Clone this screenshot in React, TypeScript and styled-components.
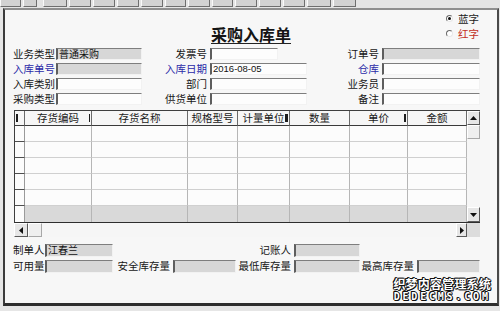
import React from 'react';
import styled, { createGlobalStyle } from 'styled-components';

const Global = createGlobalStyle`
  html, body { margin: 0; padding: 0; background: #e6e6e6; }
  body { font-family: "Noto Sans CJK SC", "Noto Sans", sans-serif; color: #111; }
  #root { width: 500px; height: 311px; overflow: hidden; }
`;

const Screen = styled.div`
  width: 500px;
  height: 311px;
  display: flex;
  flex-direction: column;
  background: #e6e6e6;
  overflow: hidden;
`;

const Toolbar = styled.div`
  height: 8px;
  flex-shrink: 0;
  display: flex;
  gap: 2px;
  align-items: flex-start;
  background: #e4e4e4;
`;

const ToolButton = styled.div<{ $w: number; $gap?: number }>`
  width: ${p => p.$w}px;
  margin-left: ${p => p.$gap ?? 0}px;
  height: 7px;
  box-sizing: border-box;
  background: #d2d2d2;
  border-left: 1px solid #fafafa;
  border-right: 1px solid #6e6e6e;
  border-bottom: 1px solid #6e6e6e;
`;

const Panel = styled.div`
  position: relative;
  margin-left: 3px;
  width: 496px;
  height: 298px;
  flex-shrink: 0;
  box-sizing: border-box;
  background: #f7f7f7;
  border-top: 2px solid #8e8e8e;
  border-left: 2px solid #3c3c3c;
  border-right: 2px solid #4a4a4a;
  border-bottom: 3px solid #2e2e2e;
  display: flex;
  flex-direction: column;
`;

const Head = styled.div`
  height: 36px;
  display: grid;
  grid-template-columns: 1fr auto 1fr;
`;

const Title = styled.h1`
  grid-column: 2;
  align-self: start;
  margin: 16px 0 0;
  height: 17px;
  font-size: 16px;
  line-height: 17px;
  font-weight: 700;
  color: #141414;
  border-bottom: 1px solid #222;
  white-space: nowrap;
`;

const RadioGroup = styled.div`
  grid-column: 3;
  justify-self: end;
  margin: 1px 18px 0 0;
  display: flex;
  flex-direction: column;
`;

const RadioItem = styled.label<{ $red?: boolean }>`
  display: flex;
  align-items: center;
  gap: 5px;
  height: 15px;
  font-size: 10.5px;
  line-height: 15px;
  color: ${p => (p.$red ? '#c2301e' : '#1a1a1a')};
`;

const RadioDot = styled.span<{ $on?: boolean }>`
  width: 7px;
  height: 7px;
  box-sizing: border-box;
  border-radius: 50%;
  border: 1px solid;
  border-color: #6a6a6a #e8e8e8 #e8e8e8 #6a6a6a;
  background: #fff;
  display: flex;
  align-items: center;
  justify-content: center;
  &::after {
    content: '';
    width: 3px;
    height: 3px;
    border-radius: 50%;
    background: ${p => (p.$on ? '#111' : 'transparent')};
  }
`;

const Form = styled.div`
  display: grid;
  grid-template-columns: 43px 86px 68px 97px 75px 98px;
  grid-auto-rows: 15px;
  align-items: center;
  padding-left: 8px;
`;

const Label = styled.span<{ $blue?: boolean; $right?: boolean; $col?: number }>`
  ${p => (p.$col ? `grid-column: ${p.$col};` : '')}
  font-size: 10.5px;
  line-height: 12px;
  white-space: nowrap;
  color: ${p => (p.$blue ? '#2a2aa8' : '#161616')};
  text-align: ${p => (p.$right ? 'right' : 'left')};
  padding-right: ${p => (p.$right ? 3 : 0)}px;
`;

const Field = styled.div<{ $gray?: boolean; $w?: number; $h?: number; $col?: number }>`
  box-sizing: border-box;
  height: ${p => p.$h ?? 12}px;
  width: ${p => (p.$w ? `${p.$w}px` : 'auto')};
  ${p => (p.$col ? `grid-column: ${p.$col};` : '')}
  background: ${p => (p.$gray ? '#d7d7d7' : '#fdfdfd')};
  border-top: 1px solid #7e7e7e;
  border-left: 2px solid #5e5e5e;
  border-right: 1px solid #f2f2f2;
  border-bottom: 1px solid #f2f2f2;
  display: flex;
  align-items: center;
  padding-left: 1px;
  white-space: nowrap;
`;

const FieldText = styled.span`
  font-size: 10px;
  line-height: 10px;
  color: #111;
`;

const DateText = styled.span`
  font-family: "Liberation Sans", Arial, sans-serif;
  font-size: 9.5px;
  line-height: 10px;
  color: #111;
`;

const GridWrap = styled.div`
  margin: 4px 0 0 9px;
  width: 466px;
  display: flex;
  flex-direction: column;
`;

const GridRow = styled.div`
  display: flex;
`;

const Table = styled.div`
  width: 453px;
  box-sizing: border-box;
  display: grid;
  grid-template-columns: 10px 67px 96px 50px 52px 60px 58px 59px;
  grid-template-rows: 15px repeat(6, 16px);
  border-top: 1px solid #3e3e3e;
  border-left: 1px solid #3e3e3e;
  border-bottom: 1px solid #2e2e2e;
  background: #fcfcfc;
`;

const HeadCell = styled.div`
  position: relative;
  box-sizing: border-box;
  background: #f6f6f6;
  border-right: 1px solid #6a6a6a;
  border-bottom: 1px solid #3a3a3a;
  font-size: 10.5px;
  line-height: 14px;
  text-align: center;
  white-space: nowrap;
  color: #1a1a1a;
`;

const Mark = styled.span<{ $side: 'left' | 'right'; $w: number }>`
  position: absolute;
  top: 3px;
  bottom: 3px;
  ${p => p.$side}: 1px;
  width: ${p => p.$w}px;
  background: #1e1e1e;
`;

const Cell = styled.div<{ $ind?: boolean; $total?: boolean }>`
  box-sizing: border-box;
  background: ${p => (p.$total && !p.$ind ? '#d9d9d9' : '#fcfcfc')};
  border-right: 1px solid ${p => (p.$ind ? '#9a9a9a' : '#b6b6b6')};
  border-bottom: ${p => (p.$total ? 'none' : `1px solid ${p.$ind ? '#4e4e4e' : '#d0d0d0'}`)};
`;

const VScroll = styled.div`
  width: 13px;
  box-sizing: border-box;
  display: flex;
  flex-direction: column;
  background: #f6f6f6;
  border-top: 1px solid #3e3e3e;
  border-bottom: 1px solid #2e2e2e;
`;

const ScrollBtn = styled.div<{ $w?: number; $h?: number }>`
  flex-shrink: 0;
  width: ${p => (p.$w ? `${p.$w}px` : 'auto')};
  height: ${p => (p.$h ? `${p.$h}px` : 'auto')};
  box-sizing: border-box;
  background: #e6e6e6;
  border: 1px solid;
  border-color: #ffffff #5a5a5a #5a5a5a #ffffff;
  display: flex;
  align-items: center;
  justify-content: center;
`;

const Thumb = styled.div<{ $w?: number; $h?: number }>`
  flex-shrink: 0;
  width: ${p => (p.$w ? `${p.$w}px` : 'auto')};
  height: ${p => (p.$h ? `${p.$h}px` : 'auto')};
  box-sizing: border-box;
  background: #efefef;
  border: 1px solid;
  border-color: #ffffff #a8a8a8 #a8a8a8 #ffffff;
`;

const Track = styled.div`
  flex: 1;
`;

const HScroll = styled.div`
  height: 14px;
  display: flex;
`;

const HBar = styled.div`
  width: 453px;
  display: flex;
  background: #f6f6f6;
`;

const Corner = styled.div`
  width: 13px;
  background: #dcdcdc;
`;

const Footer = styled.div`
  margin-top: 5px;
  padding-left: 8px;
  display: grid;
  grid-template-columns: 32px 68px 60px 63px 58px 66px 57px 63px;
  grid-auto-rows: 16px;
  align-items: center;
`;

const Watermark = styled.div`
  position: absolute;
  right: 6px;
  bottom: 1px;
  display: flex;
  flex-direction: column;
  align-items: center;
  color: #fff;
  text-shadow: 1px 0 0 #111, -1px 0 0 #111, 0 1px 0 #111, 0 -1px 0 #111, 1px 1px 0 #111, -1px -1px 0 #111;
  font-weight: 700;
`;

const WmLine = styled.span`
  font-size: 12px;
  line-height: 14px;
  letter-spacing: 0.2px;
`;

const WmSub = styled.span`
  font-family: "DejaVu Sans Mono", monospace;
  font-size: 10px;
  line-height: 11px;
  letter-spacing: 2.8px;
`;

const Tri = ({ dir }: { dir: 'up' | 'down' | 'left' | 'right' }) => {
  const pts = {
    up: '0,4 7,4 3.5,0',
    down: '0,0 7,0 3.5,4',
    left: '4,0 4,7 0,3.5',
    right: '0,0 0,7 4,3.5',
  }[dir];
  const vertical = dir === 'up' || dir === 'down';
  return (
    <svg width={vertical ? 7 : 4} height={vertical ? 4 : 7} viewBox={vertical ? '0 0 7 4' : '0 0 4 7'}>
      <polygon points={pts} fill="#111" />
    </svg>
  );
};

const toolWidths: Array<[number, number?]> = [
  [21], [14], [24, 4], [22], [22], [22], [22], [21], [22], [21], [22], [22], [22], [24], [23],
];

const headers: Array<{ t: string; mark?: { side: 'left' | 'right'; w: number } }> = [
  { t: '', mark: { side: 'left', w: 2 } },
  { t: '存货编码', mark: { side: 'right', w: 1 } },
  { t: '存货名称' },
  { t: '规格型号' },
  { t: '计量单位', mark: { side: 'right', w: 3 } },
  { t: '数量' },
  { t: '单价', mark: { side: 'right', w: 2 } },
  { t: '金额' },
];

export default function App() {
  const rows = [0, 1, 2, 3, 4, 5];
  return (
    <Screen>
      <Global />
      <Toolbar>
        {toolWidths.map(([w, g], i) => (
          <ToolButton key={i} $w={w} $gap={g} />
        ))}
      </Toolbar>
      <Panel>
        <Head>
          <Title>采购入库单</Title>
          <RadioGroup>
            <RadioItem>
              <RadioDot $on />
              蓝字
            </RadioItem>
            <RadioItem $red>
              <RadioDot />
              红字
            </RadioItem>
          </RadioGroup>
        </Head>

        <Form>
          <Label>业务类型</Label>
          <Field $gray><FieldText>普通采购</FieldText></Field>
          <Label $right>发票号</Label>
          <Field $w={68} />
          <Label $right>订单号</Label>
          <Field $gray />

          <Label $blue>入库单号</Label>
          <Field $gray />
          <Label $right $blue>入库日期</Label>
          <Field><DateText>2016-08-05</DateText></Field>
          <Label $right $blue>仓库</Label>
          <Field />

          <Label>入库类别</Label>
          <Field />
          <Label $right>部门</Label>
          <Field />
          <Label $right>业务员</Label>
          <Field />

          <Label>采购类型</Label>
          <Field />
          <Label $right>供货单位</Label>
          <Field />
          <Label $right>备注</Label>
          <Field />
        </Form>

        <GridWrap>
          <GridRow>
            <Table>
              {headers.map((h, i) => (
                <HeadCell key={i}>
                  {h.t}
                  {h.mark && <Mark $side={h.mark.side} $w={h.mark.w} />}
                </HeadCell>
              ))}
              {rows.map(r =>
                headers.map((_, c) => (
                  <Cell key={`${r}-${c}`} $ind={c === 0} $total={r === 5} />
                ))
              )}
            </Table>
            <VScroll>
              <ScrollBtn $h={14}><Tri dir="up" /></ScrollBtn>
              <Thumb $h={14} />
              <Track />
              <ScrollBtn $h={15}><Tri dir="down" /></ScrollBtn>
            </VScroll>
          </GridRow>
          <HScroll>
            <HBar>
              <ScrollBtn $w={14}><Tri dir="left" /></ScrollBtn>
              <Thumb $w={14} />
              <Track />
              <ScrollBtn $w={11}><Tri dir="right" /></ScrollBtn>
            </HBar>
            <Corner />
          </HScroll>
        </GridWrap>

        <Footer>
          <Label $col={1}>制单人</Label>
          <Field $gray $h={13} $col={2}><FieldText>江春兰</FieldText></Field>
          <Label $right $col={5}>记账人</Label>
          <Field $gray $h={13} $col={6} />

          <Label $col={1}>可用量</Label>
          <Field $gray $h={13} />
          <Label $right>安全库存量</Label>
          <Field $gray $h={13} />
          <Label $right>最低库存量</Label>
          <Field $gray $h={13} />
          <Label $right>最高库存量</Label>
          <Field $gray $h={13} />
        </Footer>

        <Watermark>
          <WmLine>织梦内容管理系统</WmLine>
          <WmSub>DEDECMS.COM</WmSub>
        </Watermark>
      </Panel>
    </Screen>
  );
}
